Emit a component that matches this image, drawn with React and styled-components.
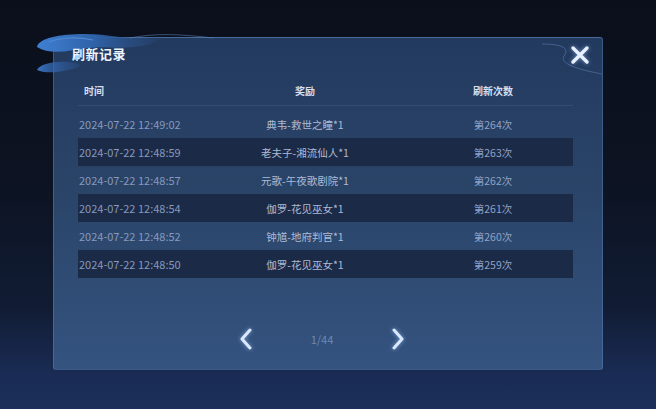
import React from "react";
import styled, { createGlobalStyle } from "styled-components";

const GlobalStyle = createGlobalStyle`
  html, body {
    margin: 0;
    padding: 0;
    width: 656px;
    height: 409px;
    overflow: hidden;
    font-family: "Noto Sans CJK SC", "Noto Sans", sans-serif;
  }
`;

const records = [
  { time: "2024-07-22 12:49:02", reward: "典韦-救世之瞳*1", count: "第264次" },
  { time: "2024-07-22 12:48:59", reward: "老夫子-湘流仙人*1", count: "第263次" },
  { time: "2024-07-22 12:48:57", reward: "元歌-午夜歌剧院*1", count: "第262次" },
  { time: "2024-07-22 12:48:54", reward: "伽罗-花见巫女*1", count: "第261次" },
  { time: "2024-07-22 12:48:52", reward: "钟馗-地府判官*1", count: "第260次" },
  { time: "2024-07-22 12:48:50", reward: "伽罗-花见巫女*1", count: "第259次" },
];

export default function App() {
  return (
    <Page>
      <GlobalStyle />
      <Panel>
        <Cloud viewBox="0 0 180 50" aria-hidden="true">
          <defs>
            <linearGradient id="cloudFill" x1="0" y1="0" x2="1" y2="0">
              <stop offset="0" stopColor="#3f7fd2" />
              <stop offset="0.45" stopColor="#2f62a8" />
              <stop offset="0.8" stopColor="#2a4f85" stopOpacity="0.6" />
              <stop offset="1" stopColor="#2a4f82" stopOpacity="0" />
            </linearGradient>
            <linearGradient id="cloudSmall" x1="0" y1="0" x2="1" y2="0">
              <stop offset="0" stopColor="#3a74c4" />
              <stop offset="1" stopColor="#2b5694" stopOpacity="0.3" />
            </linearGradient>
          </defs>
          <path
            d="M2 15 C4 6 24 2 50 2 C70 2 80 5 95 6 C110 7 118 4 130 5 C122 10 112 14 98 15 C80 17 70 14 54 16 C36 18 16 24 2 15 Z"
            fill="url(#cloudFill)"
          />
          <path
            d="M14 10 C26 5 44 5 58 8"
            stroke="#5f95de"
            strokeWidth="1.2"
            fill="none"
            opacity="0.7"
          />
          <path
            d="M95 6 C120 1 145 2 178 6"
            stroke="#5b84bd"
            strokeWidth="1"
            fill="none"
            opacity="0.55"
          />
          <path
            d="M2 38 C5 32 18 29 34 30 C44 31 48 33 42 36 C30 39 12 43 2 38 Z"
            fill="url(#cloudSmall)"
          />
        </Cloud>
        <Wave viewBox="0 0 60 40" aria-hidden="true">
          <path
            d="M0 2 C20 2 28 6 22 14 C18 20 28 26 60 32"
            stroke="#6a8fc4"
            strokeWidth="1"
            fill="none"
            opacity="0.45"
          />
        </Wave>
        <TitleBar>刷新记录</TitleBar>
        <CloseButton aria-label="关闭">
          <svg viewBox="0 0 20 20" width="20" height="20">
            <path
              d="M3 3 L17 17 M17 3 L3 17"
              stroke="#e8f1ff"
              strokeWidth="3.4"
              strokeLinecap="round"
            />
          </svg>
        </CloseButton>
        <Table>
          <HeaderRow>
            <HeadCell $align="left">时间</HeadCell>
            <HeadCell>奖励</HeadCell>
            <HeadCell $offset>刷新次数</HeadCell>
          </HeaderRow>
          <Body>
            {records.map((r, i) => (
              <Row key={r.time} $dark={i % 2 === 1}>
                <TimeCell>{r.time}</TimeCell>
                <RewardCell>{r.reward}</RewardCell>
                <CountCell>{r.count}</CountCell>
              </Row>
            ))}
          </Body>
        </Table>
        <Pager>
          <Arrow aria-label="上一页">
            <svg viewBox="0 0 16 24" width="16" height="24">
              <polyline
                points="12,3 4,12 12,21"
                fill="none"
                stroke="#dbe8ff"
                strokeWidth="3"
                strokeLinecap="round"
                strokeLinejoin="round"
              />
            </svg>
          </Arrow>
          <PageNum>1/44</PageNum>
          <Arrow aria-label="下一页">
            <svg viewBox="0 0 16 24" width="16" height="24">
              <polyline
                points="4,3 12,12 4,21"
                fill="none"
                stroke="#dbe8ff"
                strokeWidth="3"
                strokeLinecap="round"
                strokeLinejoin="round"
              />
            </svg>
          </Arrow>
        </Pager>
      </Panel>
    </Page>
  );
}

const Page = styled.div`
  box-sizing: border-box;
  width: 656px;
  height: 409px;
  padding: 37px 0 0 53px;
  background: linear-gradient(
    180deg,
    #0b0f1b 0%,
    #0c1322 45%,
    #111c34 75%,
    #1a2c55 92%,
    #1b2f5a 100%
  );
`;

const Panel = styled.div`
  position: relative;
  box-sizing: border-box;
  width: 550px;
  height: 333px;
  border-radius: 3px;
  border: 1px solid rgba(110, 150, 210, 0.35);
  background: linear-gradient(180deg, #233a5f 0%, #2a4468 45%, #34537f 100%);
  display: flex;
  flex-direction: column;
`;

const Cloud = styled.svg`
  position: absolute;
  left: -19px;
  top: -6px;
  width: 180px;
  height: 50px;
  pointer-events: none;
`;

const Wave = styled.svg`
  position: absolute;
  right: 0;
  top: 4px;
  width: 60px;
  height: 40px;
  pointer-events: none;
`;

const TitleBar = styled.div`
  position: relative;
  height: 31px;
  display: flex;
  align-items: center;
  padding-left: 18px;
  color: #eef4ff;
  font-size: 13px;
  font-weight: 700;
  letter-spacing: 0.5px;
`;

const CloseButton = styled.button`
  position: absolute;
  top: 6px;
  right: 11px;
  width: 22px;
  height: 22px;
  padding: 0;
  border: none;
  background: none;
  display: flex;
  align-items: center;
  justify-content: center;
  filter: drop-shadow(0 0 2px rgba(170, 205, 255, 0.6));
`;

const Table = styled.div`
  margin: 0 29px 0 24px;
  display: flex;
  flex-direction: column;
`;

const columns = `
  display: grid;
  grid-template-columns: 150px 154px 1fr;
  align-items: center;
`;

const HeaderRow = styled.div`
  ${columns}
  height: 24px;
  margin-top: 9px;
  padding-bottom: 3px;
  border-bottom: 1px solid rgba(150, 180, 230, 0.12);
`;

const HeadCell = styled.div`
  text-align: ${(p) => p.$align || "center"};
  padding-left: ${(p) => (p.$align === "left" ? "6px" : p.$offset ? "31px" : "0")};
  color: #d5dff0;
  font-size: 10px;
  font-weight: 700;
`;

const Body = styled.div`
  margin-top: 4px;
  display: flex;
  flex-direction: column;
`;

const Row = styled.div`
  ${columns}
  height: 28px;
  background: ${(p) => (p.$dark ? "#1b2a46" : "transparent")};
  font-size: 11px;
`;

const TimeCell = styled.div`
  padding-left: 1px;
  color: #8799bd;
  white-space: nowrap;
`;

const RewardCell = styled.div`
  text-align: center;
  color: #aebbd5;
  font-size: 10.5px;
  white-space: nowrap;
`;

const CountCell = styled.div`
  text-align: center;
  padding-left: 31px;
  color: #8fa2c6;
  font-size: 10.5px;
`;

const Pager = styled.div`
  margin-top: 49px;
  display: flex;
  justify-content: center;
  align-items: center;
  gap: 50px;
  padding-right: 12px;
`;

const Arrow = styled.button`
  width: 16px;
  height: 24px;
  padding: 0;
  border: none;
  background: none;
  display: flex;
  filter: drop-shadow(0 0 2px rgba(160, 200, 255, 0.7));
`;

const PageNum = styled.span`
  width: 36px;
  text-align: center;
  color: #7088b2;
  font-size: 11px;
`;
